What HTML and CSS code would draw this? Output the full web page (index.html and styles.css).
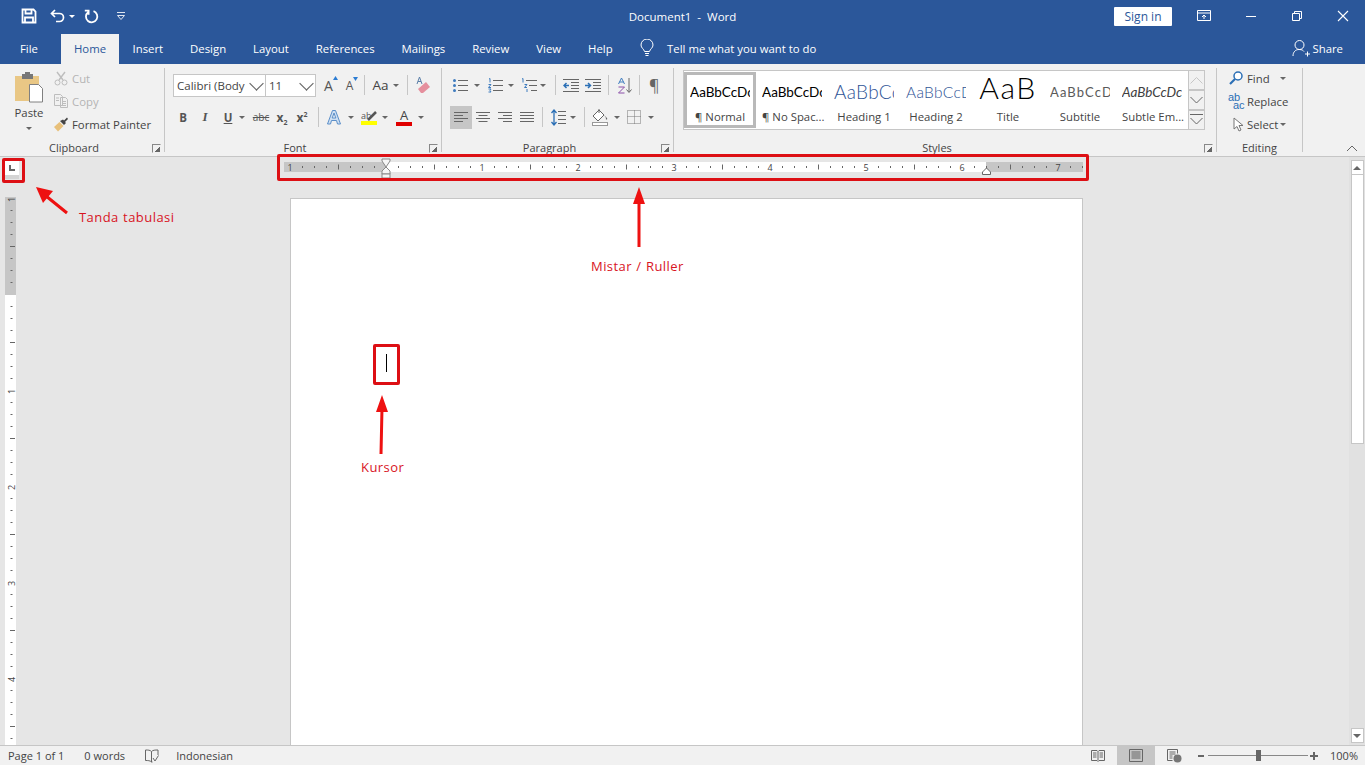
FILE: index.html
```html
<!DOCTYPE html>
<html lang="en">
<head>
    <meta charset="UTF-8">
    <meta name="viewport" content="width=device-width, initial-scale=1.0">
    <title>Document1 - Word</title>
    <link rel="stylesheet" href="styles.css">
</head>
<body>
<div class="app">
    <!-- title bar -->
    <header class="titlebar">
        <div class="qat">
            <svg class="qat-save" width="16" height="16" viewBox="0 0 16 16"><path d="M1.500 1.500h11l2 2v11h-13z M4.500 1.500v4h6v-4 M4 14.500v-5h8v5" fill="none" stroke="#fff" stroke-width="1.800"/></svg>
            <svg class="qat-undo" width="16" height="16" viewBox="0 0 16 16"><path d="M5 2L1.500 5.500 5 9M2 5.500h7.500a4 4 0 0 1 0 8H6" fill="none" stroke="#fff" stroke-width="1.700"/></svg>
            <span class="caret caret-white qat-caret"></span>
            <svg class="qat-redo" width="16" height="16" viewBox="0 0 16 16"><path d="M10.500 3.200A5.700 5.700 0 1 1 5 4.200M1.800 2.600H5.600V6.800" fill="none" stroke="#fff" stroke-width="1.800"/></svg>
            <svg class="qat-more" width="10" height="10" viewBox="0 0 10 10"><path d="M1 1.500h8M1.500 4.500h7L5 8.500z" fill="none" stroke="#dfe6f1" stroke-width="1"/></svg>
        </div>
        <div class="doc-title">Document1 &nbsp;-&nbsp; Word</div>
        <div class="win-controls">
            <button class="signin">Sign in</button>
            <svg class="win-icon" width="14" height="12" viewBox="0 0 14 12"><path d="M.5.500h13v10H.5zM.5 3h13M7 9V5M5 7l2-2 2 2" fill="none" stroke="#fff"/></svg>
            <svg class="win-icon" width="12" height="12" viewBox="0 0 12 12"><path d="M1 6.500h10" stroke="#fff"/></svg>
            <svg class="win-icon" width="12" height="12" viewBox="0 0 12 12"><path d="M1.500 3.500h7v7h-7zM3.500 3.500v-2h7v7h-2" fill="none" stroke="#fff"/></svg>
            <svg class="win-icon" width="12" height="12" viewBox="0 0 12 12"><path d="M1 1l10 10M11 1L1 11" stroke="#fff" stroke-width="1.100"/></svg>
        </div>
    </header>

    <!-- tabs -->
    <nav class="tabs">
        <span class="tab tab-file">File</span>
        <span class="tab tab-active">Home</span>
        <span class="tab">Insert</span>
        <span class="tab">Design</span>
        <span class="tab">Layout</span>
        <span class="tab">References</span>
        <span class="tab">Mailings</span>
        <span class="tab">Review</span>
        <span class="tab">View</span>
        <span class="tab">Help</span>
        <svg class="bulb" width="14" height="18" viewBox="0 0 14 18"><path d="M4.500 12.500C4 10 1 9 1 6a6 6 0 0 1 12 0c0 3-3 4-3.500 6.500zM5 14.500h4M5.500 16.500h3" fill="none" stroke="#fff"/></svg>
        <span class="tell-me">Tell me what you want to do</span>
        <span class="share">
            <svg width="18" height="18" viewBox="0 0 18 18"><path d="M1 17c0-4 2.500-6.500 6-6.500s4 1 5 2M7.500 10.500a4.500 4.500 0 1 0 0-9 4.500 4.500 0 0 0 0 9zM13 15h5M15.500 12.500v5" fill="none" stroke="#fff"/></svg>
            Share
        </span>
    </nav>

    <!-- ribbon -->
    <section class="ribbon">
        <div class="group group-clipboard">
            <div class="group-body clip-body">
                <div class="paste">
                    <svg width="30" height="31" viewBox="0 0 30 31"><rect x="1" y="4" width="24" height="25" fill="#e9c785"/><rect x="8" y="2" width="11" height="5" fill="#777"/><rect x="11" y="0" width="5" height="3" fill="#777"/><path d="M15.500 12.500h9l4 4v13.500h-13z" fill="#fff" stroke="#808080"/></svg>
                    <span>Paste</span>
                    <span class="caret"></span>
                </div>
                <div class="clip-list">
                    <div class="small-tool disabled">
                        <svg width="14" height="15" viewBox="0 0 14 15"><path d="M3 1l6 8M11 1L5 9" stroke="#bdbdbd" stroke-width="1.400"/><circle cx="3.500" cy="11.500" r="2.500" fill="none" stroke="#bdbdbd"/><circle cx="10.500" cy="11.500" r="2.500" fill="none" stroke="#bdbdbd"/></svg>
                        Cut
                    </div>
                    <div class="small-tool disabled">
                        <svg width="14" height="14" viewBox="0 0 14 14"><path d="M.5.500h6l2 2v9h-8zM6.500 3.500h5l2 2v8h-7zM2 4h3M2 6.500h3M8 7.500h4M8 9.500h4M8 11.500h4" fill="#f1f1f1" stroke="#bdbdbd"/></svg>
                        Copy
                    </div>
                    <div class="small-tool">
                        <svg class="painter" width="16" height="15" viewBox="0 0 16 15"><path d="M1 10L6.500 5l4 4L5 14.500z" fill="#e8c07a"/><path d="M7 4l4 4 2-2-1-1 3-3-1-1.500-3 3-1-1z" fill="#444"/></svg>
                        Format Painter
                    </div>
                </div>
            </div>
            <div class="group-label">Clipboard</div>
            <span class="launcher"></span>
        </div>

        <div class="group group-font">
            <div class="group-body tool-rows">
                <div class="tool-row font-row-top">
                    <div class="combo combo-font"><span>Calibri (Body</span><i class="chev"></i></div>
                    <div class="combo combo-size"><span>11</span><i class="chev"></i></div>
                    <span class="grow-btn">A<svg width="5" height="4" viewBox="0 0 5 4"><path d="M0 4l2.500-4L5 4z" fill="#2b7cd3"/></svg></span>
                    <span class="shrink-btn">A<svg width="5" height="4" viewBox="0 0 5 4"><path d="M0 0l2.500 4L5 0z" fill="#2b7cd3"/></svg></span>
                    <span class="vsep vsep-a"></span>
                    <span class="case-btn">Aa</span><span class="caret"></span>
                    <span class="vsep vsep-b"></span>
                    <svg class="eraser" width="16" height="18" viewBox="0 0 16 18"><path d="M6 17l-3-4 8-7 4 5-7 6z" fill="#e58f9d"/><path d="M2 8L4.500 1 7 8M3 5.500h3" fill="none" stroke="#5b7fa8"/></svg>
                </div>
                <div class="tool-row font-row-bottom">
                    <b class="fmt fmt-b">B</b>
                    <i class="fmt fmt-i">I</i>
                    <span class="fmt fmt-u">U</span><span class="caret"></span>
                    <span class="fmt fmt-s">abc</span>
                    <span class="fmt fmt-x">x<sub>2</sub></span>
                    <span class="fmt fmt-x">x<sup>2</sup></span>
                    <span class="vsep vsep-c"></span>
                    <svg class="effects" width="16" height="16" viewBox="0 0 16 16"><path d="M1.500 15L6.500 1.500h3L14.500 15h-3l-1-3.500h-5L4.500 15zM6.200 9h3.600L8 4z" fill="#cfe0f3" stroke="#5b8fc9"/></svg>
                    <span class="caret"></span>
                    <span class="highlight"><svg width="16" height="11" viewBox="0 0 16 11"><text x="0" y="9" font-size="9" fill="#555" font-family="Open Sans, sans-serif">ab</text><path d="M7 10l8-8" stroke="#555" stroke-width="2.500"/></svg><i class="swatch swatch-y"></i></span>
                    <span class="caret"></span>
                    <span class="color-a">A<i class="swatch swatch-r"></i></span>
                    <span class="caret"></span>
                </div>
            </div>
            <div class="group-label">Font</div>
            <span class="launcher"></span>
        </div>

        <div class="group group-para">
            <div class="group-body tool-rows">
                <div class="tool-row para-row-top">
                    <svg class="p-bullets" width="15" height="15" viewBox="0 0 15 15"><path d="M5 2.500h10M5 7.500h10M5 12.500h10" stroke="#666"/><circle cx="1.500" cy="2.500" r="1.500" fill="#3f7cbf"/><circle cx="1.500" cy="7.500" r="1.500" fill="#3f7cbf"/><circle cx="1.500" cy="12.500" r="1.500" fill="#3f7cbf"/></svg>
                    <span class="caret caret-a"></span>
                    <svg class="p-number" width="15" height="15" viewBox="0 0 15 15"><path d="M5 2.500h10M5 7.500h10M5 12.500h10" stroke="#666"/><path d="M1 1l1-.5v4M.5 6.500h2.500l-2.500 3h2.500M.5 11h2.500l-1 1.500 1 1.500h-2.500" fill="none" stroke="#3f7cbf"/></svg>
                    <span class="caret caret-b"></span>
                    <svg class="p-multi" width="16" height="15" viewBox="0 0 16 15"><path d="M5 2.500h11M8 7.500h8M10 12.500h6" stroke="#666"/><path d="M1 1l1-.5v4M3.500 6.500h2.500l-2.500 3h2.500M6 11v3" fill="none" stroke="#3f7cbf"/></svg>
                    <span class="caret caret-c"></span>
                    <span class="vsep vsep-d"></span>
                    <svg class="p-indent" width="16" height="13" viewBox="0 0 16 13"><path d="M0 .5h16M8 3.500h8M8 6.500h8M8 9.500h8M0 12.500h16" stroke="#666"/><path d="M6 6.500H1M3.500 4L1 6.500 3.500 9" fill="none" stroke="#2b6fb5" stroke-width="1.500"/></svg>
                    <svg class="p-indent2" width="16" height="13" viewBox="0 0 16 13"><path d="M0 .5h16M8 3.500h8M8 6.500h8M8 9.500h8M0 12.500h16" stroke="#666"/><path d="M0 6.500h5M3 4l2.500 2.500L3 9" fill="none" stroke="#2b6fb5" stroke-width="1.500"/></svg>
                    <span class="vsep vsep-e"></span>
                    <svg class="p-sort" width="15" height="17" viewBox="0 0 15 17"><path d="M.5 7L3.500 1l3 6M1.500 5h4" fill="none" stroke="#3f7cbf"/><path d="M.5 10h6l-6 6h6" fill="none" stroke="#8a4fa8"/><path d="M11 1v14M8.500 12.500L11 15.500l2.500-3" fill="none" stroke="#666"/></svg>
                    <span class="vsep vsep-f"></span>
                    <span class="pilcrow">¶</span>
                </div>
                <div class="tool-row para-row-bottom">
                    <span class="align align-on"><svg width="14" height="11" viewBox="0 0 14 11"><path d="M0 .5h14M0 3.500h9M0 6.500h14M0 9.500h9" stroke="#666"/></svg></span>
                    <span class="align"><svg width="14" height="11" viewBox="0 0 14 11"><path d="M0 .5h14M2.500 3.500h9M0 6.500h14M2.500 9.500h9" stroke="#666"/></svg></span>
                    <span class="align"><svg width="14" height="11" viewBox="0 0 14 11"><path d="M0 .5h14M5 3.500h9M0 6.500h14M5 9.500h9" stroke="#666"/></svg></span>
                    <span class="align"><svg width="14" height="11" viewBox="0 0 14 11"><path d="M0 .5h14M0 3.500h14M0 6.500h14M0 9.500h14" stroke="#666"/></svg></span>
                    <span class="vsep vsep-g"></span>
                    <svg class="p-spacing" width="15" height="17" viewBox="0 0 15 17"><path d="M7 2.500h8M7 6.500h8M7 10.500h8M7 14.500h8" stroke="#666"/><path d="M3 1v15M.5 4L3 1l2.500 3M.5 13L3 16l2.500-3" fill="none" stroke="#2b6fb5" stroke-width="1.300"/></svg>
                    <span class="caret"></span>
                    <span class="vsep vsep-h"></span>
                    <svg class="p-shade" width="17" height="18" viewBox="0 0 17 18"><path d="M1 8l6-6 5 5-6 6z" fill="#fff" stroke="#666"/><path d="M7 1v4" stroke="#666"/><path d="M12 7l3 3c1 2-2 2-1 0z" fill="#666"/><rect x=".5" y="14.500" width="15" height="3" fill="#fff" stroke="#999"/></svg>
                    <span class="caret"></span>
                    <svg class="p-border" width="14" height="14" viewBox="0 0 14 14"><path d="M.5.500h13v13H.5zM7.500 .5v13M.5 6.500h13" fill="none" stroke="#777" stroke-dasharray="1 1"/></svg>
                    <span class="caret"></span>
                </div>
            </div>
            <div class="group-label">Paragraph</div>
            <span class="launcher"></span>
        </div>

        <div class="group group-styles">
            <div class="group-body styles-body">
                <div class="gallery">
                    <div class="style-item style-selected"><div class="sample s-normal">AaBbCcDc</div><div class="style-name">¶ Normal</div></div>
                    <div class="style-item"><div class="sample s-normal">AaBbCcDc</div><div class="style-name">¶ No Spac...</div></div>
                    <div class="style-item"><div class="sample s-h1">AaBbCc</div><div class="style-name">Heading 1</div></div>
                    <div class="style-item"><div class="sample s-h2">AaBbCcD</div><div class="style-name">Heading 2</div></div>
                    <div class="style-item"><div class="sample s-title">AaB</div><div class="style-name">Title</div></div>
                    <div class="style-item"><div class="sample s-sub">AaBbCcD</div><div class="style-name">Subtitle</div></div>
                    <div class="style-item"><div class="sample s-em">AaBbCcDc</div><div class="style-name">Subtle Em...</div></div>
                </div>
                <div class="gallery-scroll">
                    <span class="gs-btn gs-off"><svg width="13" height="8" viewBox="0 0 13 8"><path d="M.5 7.500l6-6 6 6" fill="none" stroke="#c6c6c6"/></svg></span>
                    <span class="gs-btn"><svg width="13" height="8" viewBox="0 0 13 8"><path d="M.5 1l6 6 6-6" fill="none" stroke="#666"/></svg></span>
                    <span class="gs-btn"><svg width="13" height="12" viewBox="0 0 13 12"><path d="M0 .5h13M.5 4l6 6 6-6" fill="none" stroke="#666"/></svg></span>
                </div>
            </div>
            <div class="group-label">Styles</div>
            <span class="launcher"></span>
        </div>

        <div class="group group-editing">
            <div class="group-body edit-list">
                <div class="edit-tool">
                    <svg width="14" height="14" viewBox="0 0 14 14"><circle cx="9" cy="5" r="4" fill="#fff" stroke="#2b6fb5" stroke-width="1.500"/><path d="M6 8l-5 5" stroke="#2b6fb5" stroke-width="2.200"/></svg>
                    <span class="edit-text">Find</span><span class="caret"></span>
                </div>
                <div class="edit-tool">
                    <span class="abac"><span>ab</span><span class="abac-low">ac</span></span>
                    <span class="edit-text">Replace</span>
                </div>
                <div class="edit-tool">
                    <svg class="cursor-ico" width="11" height="15" viewBox="0 0 11 15"><path d="M1 1v11l3-2.500 2 4.500 2-1-2-4.500h4z" fill="#fff" stroke="#777"/></svg>
                    <span class="edit-text">Select</span><span class="caret"></span>
                </div>
            </div>
            <div class="group-label">Editing</div>
        </div>
        <svg class="collapse" width="12" height="7" viewBox="0 0 12 7"><path d="M1 6l5-5 5 5" fill="none" stroke="#666"/></svg>
    </section>

    <!-- document area -->
    <main class="workspace">
        <div class="left-col">
            <div class="tab-corner"><svg width="6" height="6" viewBox="0 0 6 6"><path d="M1 0v5h5" fill="none" stroke="#666" stroke-width="2"/></svg></div>
            <svg class="v-ruler" width="11" height="548" viewBox="0 0 11 548">
                <defs>
                    <pattern id="vticks" patternUnits="userSpaceOnUse" x="0" y="1" width="11" height="96">
                        <path d="M5.500 12.500h2M5.500 24.500h2M5.500 36.500h2M5 48.500h5M5.500 60.500h2M5.500 72.500h2M5.500 84.500h2" stroke="#666"/>
                    </pattern>
                </defs>
                <rect width="11" height="548" fill="#fff"/>
                <rect width="11" height="98" fill="#c6c6c6"/>
                <rect width="11" height="548" fill="url(#vticks)"/>
                <text class="ruler-num" transform="translate(10 5) rotate(-90)">1</text>
                <text class="ruler-num" transform="translate(10 197) rotate(-90)">1</text>
                <text class="ruler-num" transform="translate(10 293) rotate(-90)">2</text>
                <text class="ruler-num" transform="translate(10 389) rotate(-90)">3</text>
                <text class="ruler-num" transform="translate(10 485) rotate(-90)">4</text>
            </svg>
        </div>
        <div class="doc-col">
            <svg class="h-ruler" width="799" height="12" viewBox="0 0 799 12">
                <defs>
                    <pattern id="hticks" patternUnits="userSpaceOnUse" x="6" y="0" width="96" height="12">
                        <path d="M12.500 4v2M24.500 4v2M36.500 4v2M48.500 2.500v5M60.500 4v2M72.500 4v2M84.500 4v2" stroke="#666"/>
                    </pattern>
                </defs>
                <rect width="799" height="10" fill="#fff"/>
                <rect width="102" height="10" fill="#c6c6c6"/>
                <rect x="702" width="97" height="10" fill="#c6c6c6"/>
                <rect width="799" height="10" fill="url(#hticks)"/>
                <text class="ruler-num ruler-mid" x="6" y="8.500">1</text>
                <text class="ruler-num ruler-mid" x="198" y="8.500">1</text>
                <text class="ruler-num ruler-mid" x="294" y="8.500">2</text>
                <text class="ruler-num ruler-mid" x="390" y="8.500">3</text>
                <text class="ruler-num ruler-mid" x="486" y="8.500">4</text>
                <text class="ruler-num ruler-mid" x="582" y="8.500">5</text>
                <text class="ruler-num ruler-mid" x="678" y="8.500">6</text>
                <text class="ruler-num ruler-mid" x="774" y="8.500">7</text>
                <!-- indent markers -->
                <path d="M98 -3h8v2L102 5 98 -1z" fill="#f6f6f6" stroke="#888"/>
                <path d="M102 5l4 4v3h-8V9z" fill="#f6f6f6" stroke="#888"/>
                <rect x="98" y="12" width="8" height="4" fill="#f6f6f6" stroke="#888"/>
                <path d="M702.500 6l4 4v2.500h-8V10z" fill="#fff" stroke="#666"/>
            </svg>
            <div class="page"></div>
        </div>
        <div class="scrollbar">
            <span class="sb-btn"><i class="sb-up"></i></span>
            <span class="sb-thumb"></span>
            <span class="sb-btn"><i class="sb-down"></i></span>
        </div>
    </main>

    <!-- status bar -->
    <footer class="statusbar">
        <div class="status-left">
            <span class="st-page">Page 1 of 1</span>
            <span class="st-words">0 words</span>
            <svg class="st-proof" width="14" height="14" viewBox="0 0 14 14"><path d="M6.500 2.500C5 1 3 1 .5 1v10.500c2.500 0 4.500 0 6 1.500M6.500 2.500V13M6.500 2.500C8 1 10 1 13 1v5M8 9l2 3 3.500-5.500M6.500 13h1" fill="none" stroke="#666"/></svg>
            <span class="st-lang">Indonesian</span>
        </div>
        <div class="status-right">
            <svg class="st-read" width="14" height="13" viewBox="0 0 14 13"><path d="M.5 1.500h5.500l1 1 1-1h5.500v10H8l-1 1-1-1H.5zM7 2.500v9M2 4h3.500M2 6h3.500M2 8h3.500M8.500 4H12M8.500 6H12M8.500 8H12" fill="none" stroke="#666"/></svg>
            <span class="st-print"><svg width="14" height="13" viewBox="0 0 14 13"><path d="M.5.500h13v12H.5zM2.500 3h9M2.500 5h9M2.500 7h9M2.500 9h9" fill="none" stroke="#666"/></svg></span>
            <svg class="st-web" width="15" height="14" viewBox="0 0 15 14"><path d="M.5.500h10v4M.5.500v11h5M2.500 3h6M2.500 5h6M2.500 7h3M2.500 9h3" fill="none" stroke="#666"/><circle cx="10.500" cy="9.500" r="4" fill="#777"/></svg>
            <span class="zoom-minus"></span>
            <span class="zoom-track"><i class="zoom-thumb"></i></span>
            <span class="zoom-plus"></span>
            <span class="zoom-val">100%</span>
        </div>
    </footer>
</div>

<!-- annotations drawn over the screenshot -->
<div class="mark mark-tab"></div>
<div class="mark mark-ruler"></div>
<div class="mark mark-cursor"></div>
<div class="text-caret"></div>
<svg class="arrows" width="1365" height="765" viewBox="0 0 1365 765">
    <path d="M67 213L46 196M639 247V200M381 454L382 408" stroke="#ee1111" stroke-width="3" fill="none"/>
    <path d="M36 187L53 191 43 203z M639 187L645 204H633z M382 395L388 412H376z" fill="#ee1111"/>
</svg>
<span class="note note-tab">Tanda tabulasi</span>
<span class="note note-ruler">Mistar / Ruller</span>
<span class="note note-cursor">Kursor</span>
</body>
</html>
```
FILE: styles.css
```css
/* Word window */
body {
    margin: 0;
    position: relative;
    width: 1365px;
    height: 765px;
    overflow: hidden;
    font-family: 'Open Sans', 'Liberation Sans', sans-serif;
    font-size: 11.35px;
    color: #444444;
}

.app {
    display: flex;
    flex-direction: column;
    height: 765px;
}

svg {
    display: block;
    flex: none;
}

/* small dropdown triangle */
.caret {
    display: block;
    flex: none;
    width: 0;
    height: 0;
    border-left: 3px solid transparent;
    border-right: 3px solid transparent;
    border-top: 3px solid #666666;
}

.caret-white {
    border-top-color: #FFFFFF;
}

/* title bar */
.titlebar {
    display: grid;
    grid-template-columns: 1fr auto 1fr;
    align-items: center;
    height: 32px;
    background: #2B579A;
    color: #FFFFFF;
}

.qat {
    display: flex;
    align-items: center;
}

.qat-save {
    margin-left: 21px;
}

.qat-undo {
    margin-left: 13px;
}

.qat-caret {
    margin-left: 3px;
}

.qat-redo {
    margin-left: 8px;
}

.qat-more {
    margin-left: 17px;
}

.doc-title {
    font-size: 11.5px;
}

.win-controls {
    display: flex;
    align-items: center;
    justify-content: flex-end;
    gap: 34px;
    padding-right: 16px;
}

.signin {
    width: 58px;
    height: 19px;
    padding: 0;
    margin-right: -9px;
    border: none;
    border-radius: 1px;
    background: #FFFFFF;
    color: #2B579A;
    font-family: inherit;
    font-size: 12px;
}

/* tabs */
.tabs {
    display: flex;
    align-items: flex-end;
    height: 32px;
    background: #2B579A;
    color: #FFFFFF;
}

.tab {
    height: 30px;
    line-height: 29px;
    padding: 0 13.5px;
}

.tab-file {
    padding: 0 23px 0 20px;
}

.tab-active {
    padding: 0 13px;
    background: #F1F1F1;
    color: #2B579A;
}

.bulb {
    margin: 0 13px 7px 14px;
}

.tell-me {
    height: 30px;
    line-height: 29px;
}

.share {
    display: flex;
    align-items: center;
    gap: 3px;
    height: 30px;
    margin-left: auto;
    padding: 0 22px 2px 0;
    box-sizing: border-box;
}

/* ribbon */
.ribbon {
    position: relative;
    display: flex;
    height: 92px;
    border-bottom: 1px solid #C6C6C6;
    background: #F1F1F1;
    box-sizing: content-box;
}

.group {
    position: relative;
    display: flex;
    flex-direction: column;
    flex: none;
    margin-top: 4px;
    height: 84px;
    border-right: 1px solid #C6C6C6;
    box-sizing: border-box;
}

.group-body {
    flex: 1;
    min-height: 0;
}

.group-label {
    height: 15px;
    margin-bottom: -3px;
    padding-right: 16px;
    line-height: 15px;
    text-align: center;
    font-size: 11px;
}

.group-editing .group-label {
    padding-right: 0;
}

.launcher {
    position: absolute;
    right: 3px;
    bottom: -1px;
    width: 7px;
    height: 7px;
    border: 1px solid #888888;
    border-color: #888888 transparent transparent #888888;
    background: linear-gradient(135deg, transparent 0 60%, #666666 60%);
}

.group-clipboard {
    width: 165px;
}

.group-font {
    width: 277px;
}

.group-para {
    width: 232px;
}

.group-styles {
    width: 543px;
}

.group-editing {
    width: 86px;
}

.vsep {
    display: block;
    flex: none;
    width: 1px;
    height: 20px;
    background: #C6C6C6;
}

/* clipboard */
.clip-body {
    display: flex;
}

.paste {
    display: flex;
    flex-direction: column;
    align-items: center;
    width: 30px;
    margin-left: 14px;
    padding-top: 4px;
}

.paste span:first-of-type {
    margin-top: 2px;
    line-height: 16px;
}

.paste .caret {
    margin-top: 6px;
}

.clip-list {
    display: flex;
    flex-direction: column;
    margin: -1.5px 0 0 10px;
}

.small-tool {
    display: flex;
    align-items: center;
    gap: 4px;
    height: 23px;
}

.painter {
    margin: 0 -1px;
}

.disabled {
    color: #B4B4B4;
}

/* tool rows shared by font and paragraph */
.tool-rows {
    display: flex;
    flex-direction: column;
}

.tool-row {
    display: flex;
    align-items: center;
}

/* font group */
.font-row-top {
    height: 22px;
    margin-top: 6px;
    padding-left: 8px;
}

.font-row-bottom {
    height: 24px;
    margin-top: 9px;
}

.combo {
    display: flex;
    align-items: center;
    justify-content: space-between;
    box-sizing: border-box;
    height: 23px;
    padding: 0 2px 0 3px;
    border: 1px solid #C6C6C6;
    background: #FFFFFF;
    font-size: 11.5px;
    white-space: nowrap;
}

.combo-font {
    width: 93px;
}

.combo-size {
    width: 51px;
    margin-left: -1px;
}

.chev {
    flex: none;
    width: 8px;
    height: 8px;
    margin: -4px 2px 0 0;
    border-right: 1px solid #666666;
    border-bottom: 1px solid #666666;
    transform: rotate(45deg) scale(1.150);
}

.grow-btn, .shrink-btn {
    display: flex;
    font-size: 14px;
    color: #555555;
}

.grow-btn {
    margin-left: 8px;
}

.shrink-btn {
    margin-left: 8px;
    font-size: 12px;
}

.vsep-a {
    margin-left: 6px;
}

.case-btn {
    margin: 0 4px 0 7px;
    font-size: 13.5px;
}

.vsep-b {
    margin-left: 8px;
}

.eraser {
    margin-left: 7px;
}

.fmt {
    display: block;
    flex: none;
    text-align: center;
    font-family: 'Liberation Serif', serif;
    font-size: 13px;
    font-weight: bold;
    color: #555555;
}

.fmt-b {
    width: 22px;
    margin-left: 7px;
    font-family: 'Open Sans', sans-serif;
    font-size: 11.5px;
}

.fmt-i {
    width: 22px;
}

.fmt-u {
    width: 22px;
    margin-left: 1px;
    font-family: 'Open Sans', sans-serif;
    font-size: 11.5px;
    text-decoration: underline;
}

.fmt-s {
    width: 22px;
    margin-left: 5px;
    font-family: 'Open Sans', sans-serif;
    font-size: 10px;
    font-weight: normal;
    text-decoration: line-through;
}

.fmt-x {
    width: 20px;
    font-family: 'Open Sans', sans-serif;
    font-size: 12px;
}

.fmt-x sub, .fmt-x sup {
    font-size: 7px;
    line-height: 0;
}

.vsep-c {
    margin-left: 6px;
}

.effects {
    margin: 0 6px 0 7px;
}

.highlight {
    display: block;
    width: 16px;
    margin: 0 5px 0 7px;
}

.swatch {
    display: block;
    height: 4px;
}

.swatch-y {
    background: #FFFF00;
}

.swatch-r {
    background: #E00000;
}

.color-a {
    display: block;
    width: 16px;
    margin: 0 6px 0 8px;
    text-align: center;
    font-size: 13px;
    line-height: 13px;
}

/* paragraph group */
.para-row-top {
    height: 22px;
    margin-top: 6px;
    padding-left: 11px;
}

.para-row-bottom {
    height: 24px;
    margin-top: 9px;
    padding-left: 8px;
}

.caret-a {
    margin-left: 6px;
}

.caret-b {
    margin-left: 5px;
}

.caret-c {
    margin-left: 3px;
}

.p-number {
    margin-left: 8px;
}

.p-multi {
    margin-left: 7px;
}

.vsep-d {
    margin-left: 9px;
}

.p-indent {
    margin-left: 7px;
}

.p-indent2 {
    margin-left: 6px;
}

.vsep-e {
    margin-left: 7px;
}

.p-sort {
    margin-left: 9px;
}

.vsep-f {
    margin-left: 6px;
}

.pilcrow {
    margin-left: 9px;
    font-size: 16px;
    color: #666666;
}

.align {
    display: flex;
    align-items: center;
    justify-content: center;
    width: 22px;
    height: 23px;
}

.align-on {
    background: #C6C6C6;
}

.vsep-g {
    margin-left: 4px;
}

.p-spacing {
    margin: 0 4px 0 8px;
}

.vsep-h {
    margin-left: 8px;
}

.p-shade {
    margin: 0 5px 0 7px;
}

.p-border {
    margin: 0 7px 0 7px;
}

/* styles gallery */
.styles-body {
    display: flex;
    padding: 2px 0 0 9px;
}

.gallery {
    display: flex;
    width: 506px;
    height: 60px;
    box-sizing: border-box;
    border: 1px solid #C6C6C6;
    background: #FFFFFF;
}

.style-item {
    flex: none;
    box-sizing: border-box;
    width: 72px;
    height: 58px;
    padding: 3px 6px 0;
    text-align: center;
    overflow: hidden;
}

.style-selected {
    border: 3px solid #B9B9B9;
    padding: 0 3px;
    margin-top: 1px;
    height: 56px;
}

.style-selected .sample {
    margin-top: -1px;
}

.sample {
    display: flex;
    align-items: center;
    justify-content: flex-start;
    height: 35px;
    overflow: hidden;
    white-space: nowrap;
    color: #000000;
    font-family: 'Lato', 'Liberation Sans', sans-serif;
}

.s-normal {
    font-size: 13.5px;
}

.s-h1 {
    font-size: 19px;
    font-weight: 300;
    letter-spacing: 0.3px;
    color: #2F5496;
}

.s-h2 {
    font-size: 15.5px;
    font-weight: 300;
    letter-spacing: 0.3px;
    color: #2F5496;
}

.s-title {
    justify-content: center;
    align-items: flex-start;
    font-size: 30px;
    font-weight: 300;
    letter-spacing: 1.5px;
    line-height: 26px;
}

.s-sub {
    font-size: 13px;
    letter-spacing: 1.1px;
    color: #5A5A5A;
}

.s-em {
    font-size: 13.5px;
    font-style: italic;
    color: #404040;
}

.style-name {
    line-height: 16px;
    font-size: 11.35px;
    white-space: nowrap;
}

.gallery-scroll {
    display: flex;
    flex-direction: column;
    width: 16px;
    height: 60px;
}

.gs-btn {
    display: flex;
    align-items: center;
    justify-content: center;
    height: 20px;
    box-sizing: border-box;
    border: 1px solid #C6C6C6;
    border-left: none;
}

.gs-off {
    background: #F1F1F1;
}

/* editing */
.edit-list {
    margin-top: -1.5px;
}

.edit-tool {
    position: relative;
    display: flex;
    align-items: center;
    height: 23px;
    padding-left: 12px;
}

.edit-tool .caret {
    position: absolute;
    left: 63px;
    top: 10px;
}

.edit-text {
    position: absolute;
    left: 30px;
}

.abac {
    display: flex;
    flex-direction: column;
    margin-left: -1px;
    font-family: 'Liberation Sans', sans-serif;
    font-size: 11px;
    line-height: 8px;
    color: #2B6FB5;
}

.abac-low {
    margin-left: 5px;
}

.cursor-ico {
    margin-left: 4px;
}

.collapse {
    position: absolute;
    right: 7px;
    bottom: 4px;
}

/* workspace */
.workspace {
    display: flex;
    flex: 1;
    min-height: 0;
    background: #E6E6E6;
    overflow: hidden;
}

.left-col {
    display: flex;
    flex-direction: column;
    width: 284px;
    padding: 4px 0 0 5px;
    box-sizing: border-box;
}

.tab-corner {
    display: flex;
    align-items: center;
    justify-content: center;
    width: 14px;
    height: 14px;
    padding-bottom: 4px;
    background: linear-gradient(#FFFFFF 0 14px, #D4D4D4 14px);
}

.v-ruler {
    margin-top: 18px;
}

.ruler-num {
    font-family: 'Open Sans', sans-serif;
    font-size: 9px;
    fill: #444444;
}

.ruler-mid {
    text-anchor: middle;
}

.h-ruler {
    overflow: visible;
}

.doc-col {
    display: flex;
    flex-direction: column;
    width: 799px;
    padding-top: 5px;
}

.page {
    flex: none;
    width: 793px;
    height: 600px;
    margin: 24px 0 0 6px;
    box-sizing: border-box;
    border: 1px solid #C6C6C6;
    background: #FFFFFF;
}

.scrollbar {
    display: flex;
    flex-direction: column;
    align-items: center;
    width: 16px;
    margin-left: auto;
    padding: 3px 0 2px;
    box-sizing: border-box;
    background: #E1E1E1;
}

.sb-btn {
    display: flex;
    align-items: center;
    justify-content: center;
    flex: none;
    width: 13px;
    height: 15px;
    box-sizing: border-box;
    border: 1px solid #C6C6C6;
    background: #FFFFFF;
}

.sb-up {
    border-left: 4px solid transparent;
    border-right: 4px solid transparent;
    border-bottom: 4px solid #666666;
}

.sb-down {
    border-left: 4px solid transparent;
    border-right: 4px solid transparent;
    border-top: 4px solid #666666;
}

.sb-thumb {
    flex: none;
    width: 13px;
    height: 269px;
    box-sizing: border-box;
    border: 1px solid #C6C6C6;
    border-top: none;
    background: #FFFFFF;
    margin-bottom: auto;
}

/* status bar */
.statusbar {
    display: flex;
    align-items: center;
    justify-content: space-between;
    height: 20px;
    box-sizing: border-box;
    border-top: 1px solid #C6C6C6;
    background: #F1F1F1;
    font-size: 11px;
}

.status-left, .status-right {
    display: flex;
    align-items: center;
    height: 100%;
}

.st-page {
    margin-left: 8px;
}

.st-words {
    margin-left: 20px;
}

.st-proof {
    margin-left: 20px;
}

.st-lang {
    margin-left: 17px;
}

.st-print {
    display: flex;
    align-items: center;
    justify-content: center;
    width: 38px;
    height: 100%;
    margin: 0 12px 0 12px;
    background: #C6C6C6;
}

.zoom-minus {
    width: 6px;
    height: 2px;
    margin-left: 16px;
    background: #666666;
}

.zoom-track {
    position: relative;
    width: 100px;
    height: 1px;
    margin-left: 4px;
    background: #888888;
}

.zoom-thumb {
    position: absolute;
    left: 48px;
    top: -5px;
    width: 5px;
    height: 11px;
    background: #666666;
}

.zoom-plus {
    width: 8px;
    height: 8px;
    margin-left: 2px;
    background: linear-gradient(#666666, #666666) center / 8px 2px no-repeat, linear-gradient(#666666, #666666) center / 2px 8px no-repeat;
}

.zoom-val {
    margin: 0 7px 0 12px;
}

/* red annotations over the window */
.mark {
    position: absolute;
    box-sizing: border-box;
    border: 3px solid #DD0F14;
    border-radius: 2px;
}

.mark-tab {
    left: 2px;
    top: 158px;
    width: 23px;
    height: 25px;
}

.mark-ruler {
    left: 277px;
    top: 154px;
    width: 812px;
    height: 27px;
}

.mark-cursor {
    left: 373px;
    top: 344px;
    width: 27px;
    height: 41px;
}

.text-caret {
    position: absolute;
    left: 386px;
    top: 354px;
    width: 1px;
    height: 18px;
    background: #000000;
}

.arrows {
    position: absolute;
    left: 0;
    top: 0;
    pointer-events: none;
}

.note {
    position: absolute;
    font-size: 13px;
    letter-spacing: 0.45px;
    word-spacing: 0.5px;
    line-height: 18px;
    color: #D8141E;
    white-space: nowrap;
}

.note-tab {
    left: 79px;
    top: 208px;
}

.note-ruler {
    left: 591px;
    top: 257px;
}

.note-cursor {
    left: 361px;
    top: 458px;
}
```
